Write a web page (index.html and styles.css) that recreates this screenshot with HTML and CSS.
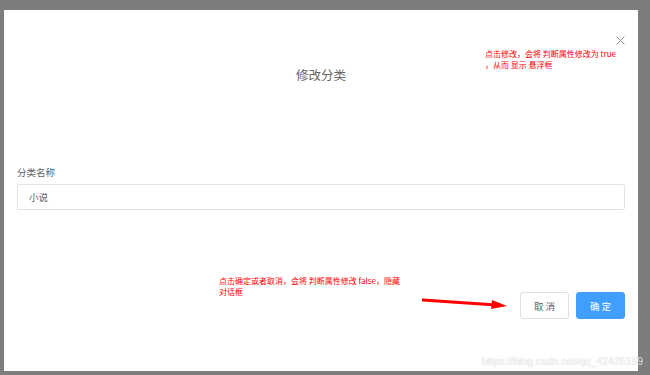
FILE: index.html
```html
<!DOCTYPE html>
<html lang="zh-CN">
<head>
    <meta charset="UTF-8">
    <meta name="viewport" content="width=device-width, initial-scale=1.0">
    <title>修改分类</title>
    <link rel="stylesheet" href="styles.css">
</head>
<body>
    <div class="dialog">
        <button class="close-btn" aria-label="关闭">
            <svg width="9" height="9" viewBox="0 0 9 9">
                <path d="M0.5 0.5 L8.5 8.5 M8.5 0.5 L0.5 8.5" stroke="#909399" stroke-width="1" fill="none"/>
            </svg>
        </button>
        <div class="note note-top">点击修改，会将 判断属性修改为 true<br>，从而 显示 悬浮框</div>

        <h3 class="dialog-title">修改分类</h3>

        <div class="form-item">
            <label class="form-label">分类名称</label>
            <div class="form-input">小说</div>
        </div>

        <div class="dialog-footer">
            <button class="btn">取 消</button>
            <button class="btn btn-primary">确 定</button>
        </div>

        <div class="note note-bottom">点击确定或者取消，会将 判断属性修改 false，隐藏<br>对话框</div>
        <svg class="arrow" width="90" height="14" viewBox="0 0 90 14">
            <path d="M1 3 L74 8" stroke="#f00" stroke-width="3" stroke-linecap="round" fill="none"/>
            <path d="M70 3 L85 9 L69 12 Z" fill="#f00"/>
        </svg>
    </div>
    <div class="watermark">https://blog.csdn.net/qq_42426159</div>
</body>
</html>
```

FILE: styles.css
```css
body {
    margin: 0;
    background-color: #7d7d7d;
    font-family: "Noto Sans CJK SC", "Noto Sans", sans-serif;
    position: relative;
    height: 375px;
    overflow: hidden;
}

.dialog {
    position: relative;
    box-sizing: border-box;
    width: 634px;
    height: 361px;
    margin: 10px 0 0 4px;
    padding: 0 13px;
    background-color: #fff;
    display: flex;
    flex-direction: column;
}

.close-btn {
    position: absolute;
    top: 26px;
    right: 13px;
    padding: 0;
    border: none;
    background: none;
    line-height: 0;
}

.dialog-title {
    margin: 56px 0 0;
    text-align: center;
    font-family: "Liberation Serif", "Noto Sans CJK SC", serif;
    font-weight: normal;
    font-size: 12.5px;
    line-height: 20px;
    color: #666;
}

.form-item {
    margin-top: 79px;
}

.form-label {
    display: block;
    font-size: 9.5px;
    line-height: 14px;
    color: #606266;
}

.form-input {
    box-sizing: border-box;
    margin-top: 5px;
    height: 26px;
    padding: 0 11px;
    border: 1px solid #e2e3e6;
    border-radius: 2px;
    font-size: 9.5px;
    line-height: 24px;
    color: #606266;
}

.dialog-footer {
    display: flex;
    justify-content: flex-end;
    gap: 7px;
    margin-top: 82px;
}

.btn {
    box-sizing: border-box;
    width: 49px;
    height: 27px;
    padding: 0;
    border: 1px solid #dcdfe6;
    border-radius: 3px;
    background-color: #fff;
    font-family: inherit;
    font-size: 9.5px;
    color: #606266;
}

.btn-primary {
    border-color: #409eff;
    background-color: #409eff;
    color: #fff;
}

.note {
    position: absolute;
    font-size: 8px;
    line-height: 11px;
    color: #f00;
    white-space: nowrap;
}

.note-top {
    top: 38px;
    left: 481px;
}

.note-bottom {
    top: 265px;
    left: 215px;
}

.arrow {
    position: absolute;
    top: 287px;
    left: 418px;
}

.watermark {
    position: absolute;
    top: 355px;
    left: 482px;
    font-family: "Liberation Sans", sans-serif;
    font-size: 10.5px;
    white-space: nowrap;
    color: rgba(255, 255, 255, 0.85);
    text-shadow: 0 0 1px rgba(0, 0, 0, 0.25);
}
```
